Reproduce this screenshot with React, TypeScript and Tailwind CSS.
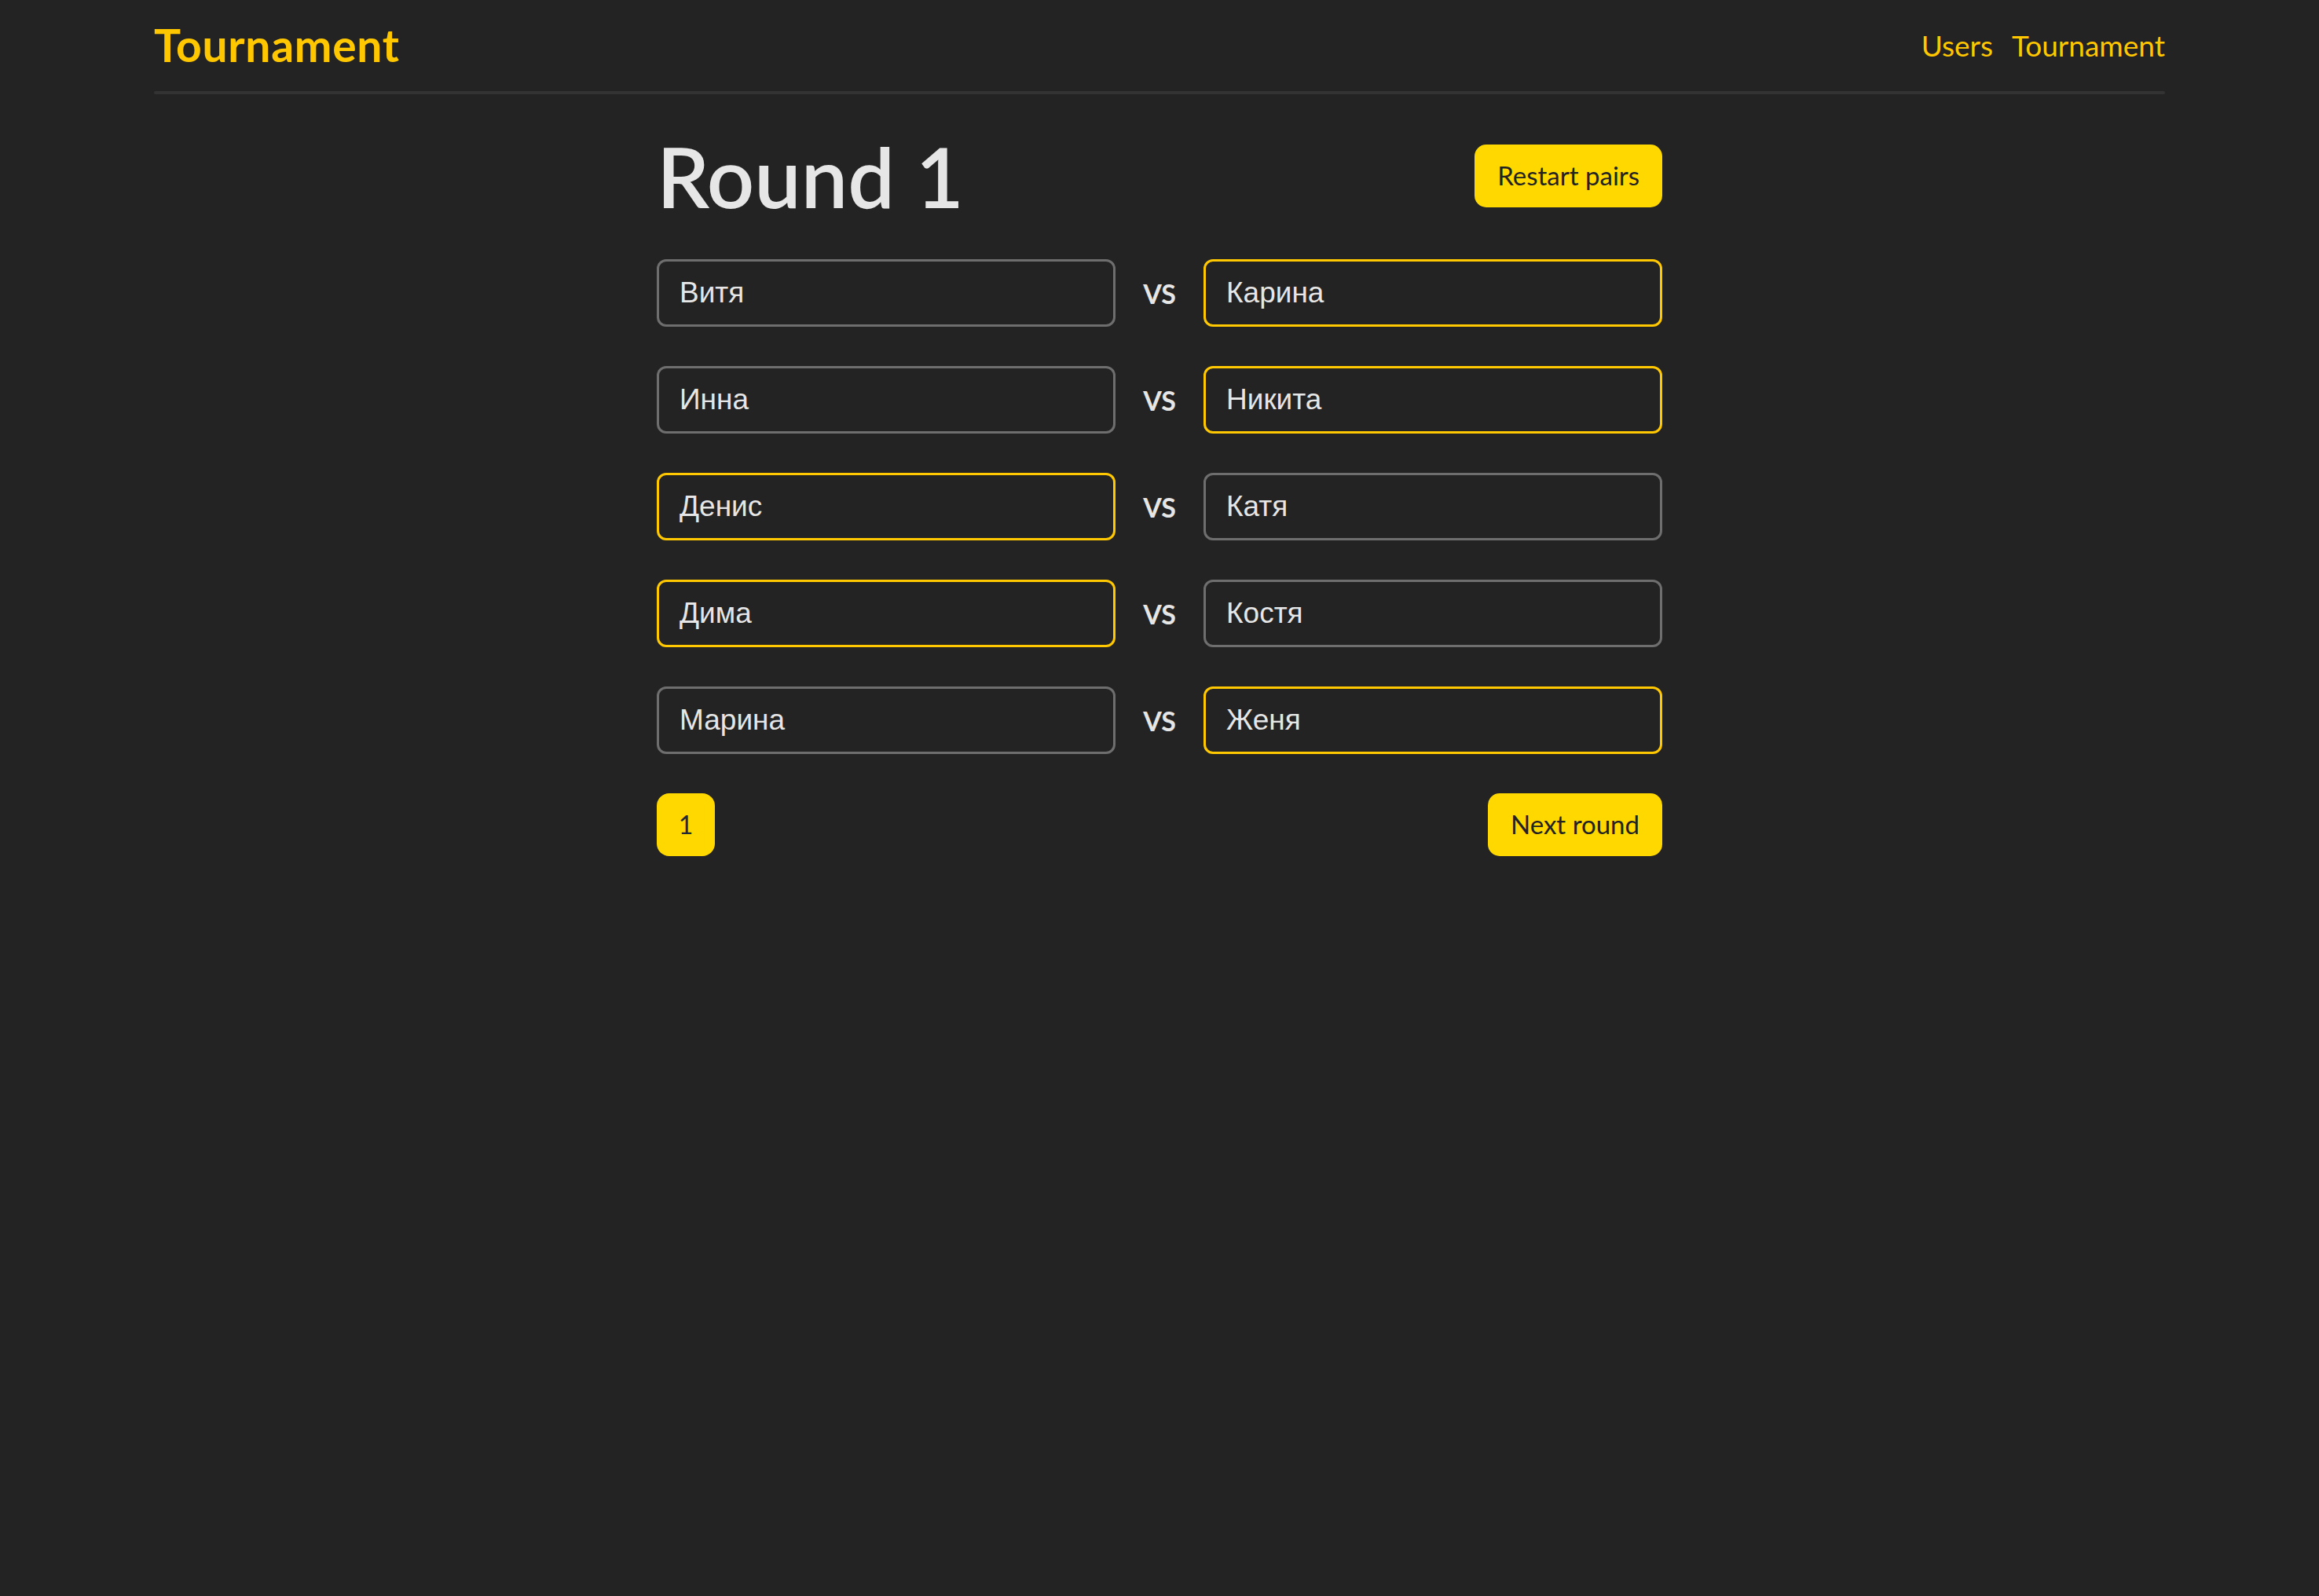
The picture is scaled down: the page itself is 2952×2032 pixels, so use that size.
import React from "react";

const pairs: [string, boolean, string, boolean][] = [
  ["Витя", false, "Карина", true],
  ["Инна", false, "Никита", true],
  ["Денис", true, "Катя", false],
  ["Дима", true, "Костя", false],
  ["Марина", false, "Женя", true],
];

const PlayerBox: React.FC<{ name: string; winner: boolean }> = ({ name, winner }) => (
  <div
    className={
      "h-[86px] rounded-[12px] border-[3px] flex items-center pl-[26px] text-[37px] text-[#e6e6e6] font-['Liberation_Sans',Arial,sans-serif] " +
      (winner ? "border-[#ffc800]" : "border-[#6e6e6e]")
    }>
    {name}
  </div>
);

export default function App() {
  return (
    <div className="min-h-screen bg-[#232323] font-['Lato','Noto_Sans',sans-serif]">
      <div className="max-w-[2560px] mx-auto">
        <header className="h-[116px] flex items-center justify-between">
          <a className="text-[57px] font-bold text-[#ffc700] tracking-[0.7px]">Tournament</a>
          <nav className="flex items-center gap-[24px] text-[37px] text-[#ffc700]">
            <a>Users</a>
            <a>Tournament</a>
          </nav>
        </header>
        <div className="h-[4px] rounded-full bg-[#333333]" />
      </div>

      <main className="max-w-[1280px] mx-auto">
        <div className="mt-[51px] flex items-center justify-between">
          <h1 className="text-[106px] leading-none font-semibold text-[#e6e6e6]">Round 1</h1>
          <button className="h-[80px] px-[29px] rounded-[15px] bg-[#ffd800] text-[33px] text-[#222]">
            Restart pairs
          </button>
        </div>

        <div className="mt-[53px] flex flex-col gap-[50px]">
          {pairs.map(([a, aw, b, bw], i) => (
            <div key={i} className="grid grid-cols-[1fr_112px_1fr] items-center">
              <PlayerBox name={a} winner={aw} />
              <span className="text-center text-[34px] font-bold text-[#e6e6e6]">VS</span>
              <PlayerBox name={b} winner={bw} />
            </div>
          ))}
        </div>

        <div className="mt-[50px] flex items-center justify-between">
          <button className="w-[74px] h-[80px] rounded-[16px] bg-[#ffd800] text-[32px] text-[#1f2a37]">1</button>
          <button className="h-[80px] px-[29px] rounded-[15px] bg-[#ffd800] text-[33px] text-[#222]">
            Next round
          </button>
        </div>
      </main>
    </div>
  );
}
